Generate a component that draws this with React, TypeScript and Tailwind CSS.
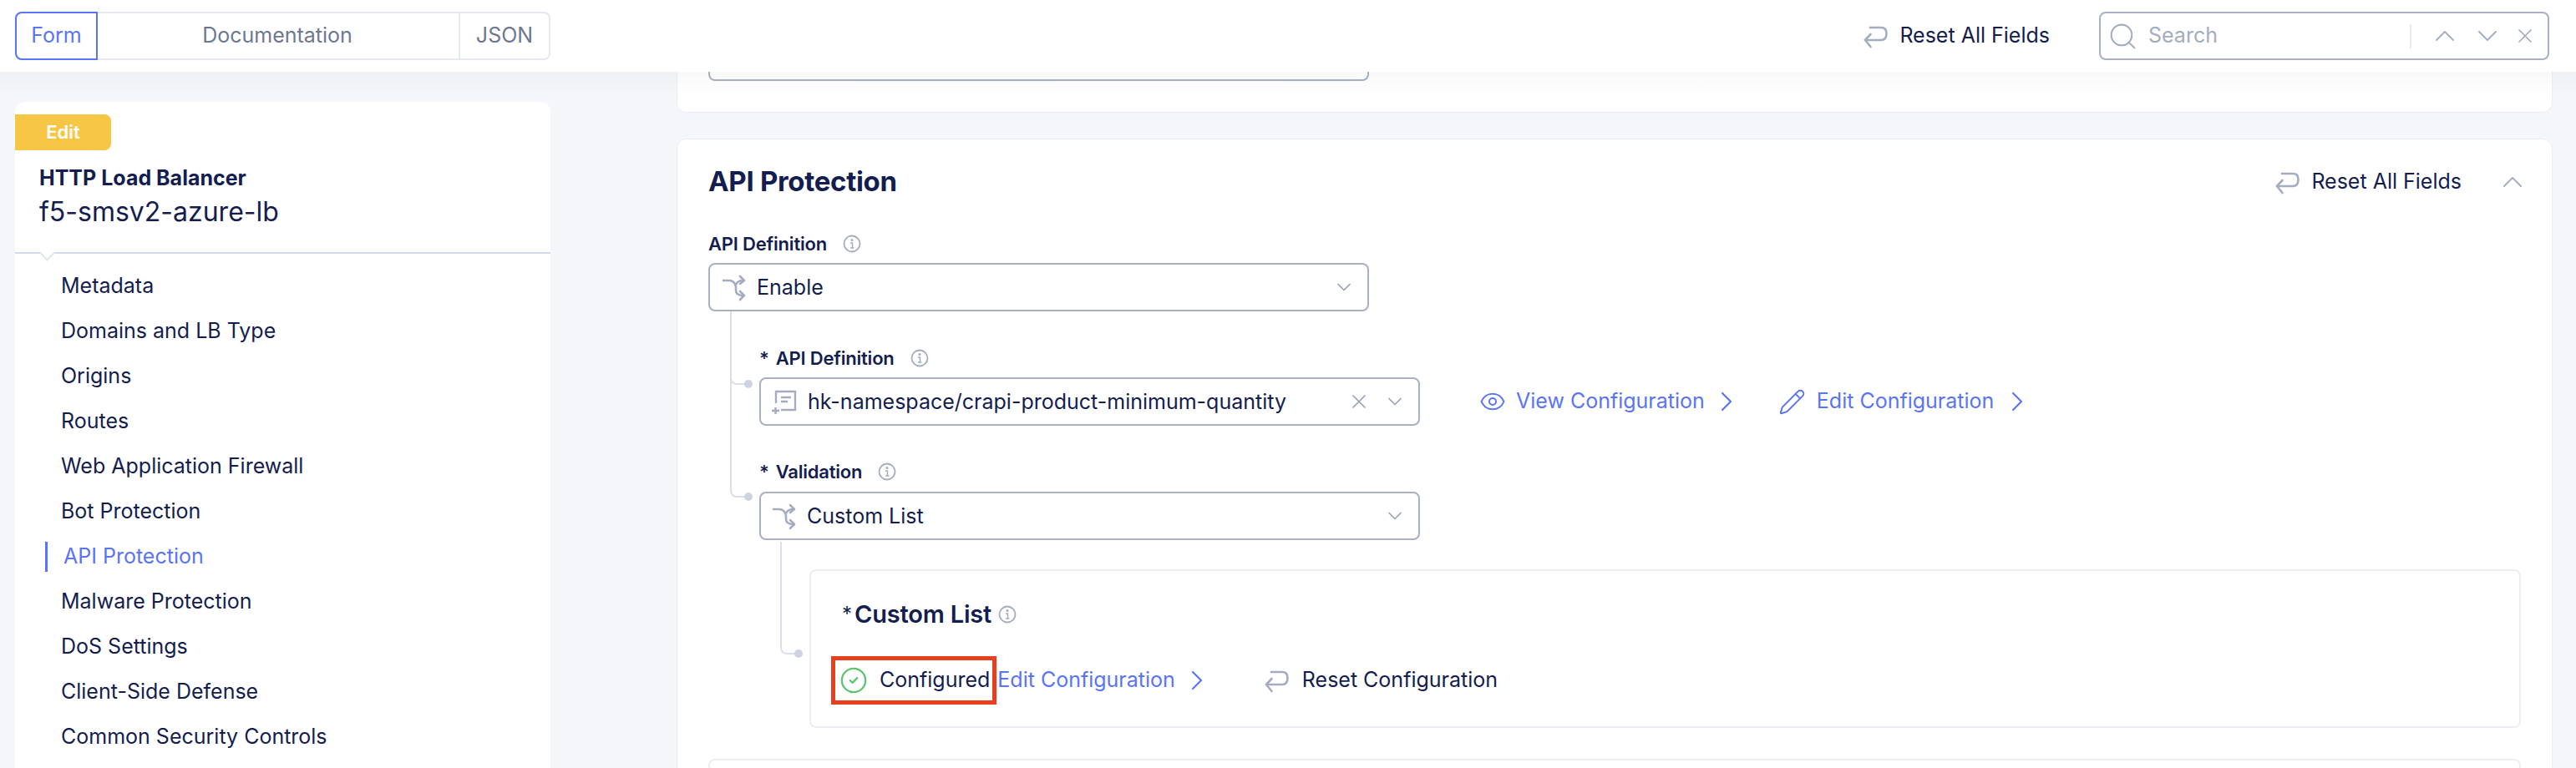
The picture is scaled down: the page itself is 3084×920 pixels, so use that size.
import { ChevronDown, ChevronRight, ChevronUp, CircleCheck, Eye, Pencil, Search, X } from "lucide-react";

const navItems = [
  "Metadata",
  "Domains and LB Type",
  "Origins",
  "Routes",
  "Web Application Firewall",
  "Bot Protection",
  "API Protection",
  "Malware Protection",
  "DoS Settings",
  "Client-Side Defense",
  "Common Security Controls",
];

function ResetIcon() {
  return (
    <svg width="30" height="30" viewBox="0 0 30 30" fill="none" stroke="#a5acc0" strokeWidth="2.6" strokeLinecap="round" strokeLinejoin="round" className="shrink-0">
      <path d="M9 5 H22 Q28.500 5 28.500 12 Q28.500 20 22 20 H3" />
      <path d="M9.500 13 L3 20 L9.500 28" />
    </svg>
  );
}

function SwitchIcon() {
  return (
    <svg width="34" height="38" viewBox="0 0 34 38" fill="none" stroke="#a5acc0" strokeWidth="2.6" strokeLinecap="round" strokeLinejoin="round" className="shrink-0">
      <path d="M5 11 H12 Q18 11 20 18 V23 Q20 29 29 29" />
      <path d="M25 24 L30 29 L25 34" />
      <path d="M20 16 Q22 11 29 11" />
      <path d="M25 6 L30 11 L25 15" />
    </svg>
  );
}

function DocIcon() {
  return (
    <svg width="36" height="36" viewBox="0 0 36 36" fill="none" stroke="#a5acc0" strokeWidth="2.4" className="shrink-0">
      <path d="M9 20 V6 H32 V28 H15" />
      <path d="M15 13 H27 M15 18 H23" />
      <path d="M4 29 H13 M8.500 25 V33" />
    </svg>
  );
}

function InfoIcon() {
  return (
    <svg width="22" height="22" viewBox="0 0 22 22" fill="none" stroke="#a5acc0" strokeWidth="1.800" className="shrink-0">
      <circle cx="11" cy="11" r="9.500" />
      <circle cx="11" cy="6.500" r="0.700" fill="#a5acc0" />
      <path d="M9 10 H11.500 V16 M9 16 H13.500" strokeWidth="1.500" />
    </svg>
  );
}

function Branch({ className }: { className: string }) {
  return (
    <div className={`absolute border-l-2 border-b-2 border-[#dcdfe9] rounded-bl-lg ${className}`}>
      <span className="absolute -right-[7px] -bottom-[6px] w-[10px] h-[10px] rounded-full bg-[#cfd3e1]" />
    </div>
  );
}

function Field({ label, required }: { label: string; required?: boolean }) {
  return (
    <div className="h-6 flex items-center text-[22px] font-semibold text-[#141d4f] tracking-[-0.2px]">
      {required && <span className="mr-2">*</span>}
      {label}
      <span className="ml-[19px]">
        <InfoIcon />
      </span>
    </div>
  );
}

function Select({ text, icon, clearable, pad }: { text: string; icon: React.ReactNode; clearable?: boolean; pad: string }) {
  return (
    <div className={`w-[791px] h-[58px] shrink-0 border-2 border-[#a9afc4] rounded-lg flex items-center bg-white ${pad}`}>
      {icon}
      <span className="ml-[11px] pt-[2px] text-[25px] text-[#141d4f]">{text}</span>
      <div className="ml-auto flex items-center gap-[15px] pr-[14px] text-[#9ba2b8]">
        {clearable && <X size={28} strokeWidth={1.5} />}
        <ChevronDown size={28} strokeWidth={1.5} />
      </div>
    </div>
  );
}

function Sidebar() {
  return (
    <aside className="w-[641px] ml-[18px] mt-[36px] shrink-0 bg-white rounded-t-xl">
      <div className="pt-[15px] h-[182px] border-b-2 border-[#d5d9e8] relative">
        <div className="w-[115px] h-[43px] bg-[#f8c645] rounded-r-lg flex items-center justify-center text-white text-[22px] font-semibold">Edit</div>
        <div className="pl-[29px] mt-[19px] text-[25px] leading-[28px] font-bold text-[#141d4f]">HTTP Load Balancer</div>
        <div className="pl-[29px] mt-[8px] text-[32px] leading-[38px] text-[#141d4f]">f5-smsv2-azure-lb</div>
        <span className="absolute left-[32px] -bottom-[8px] w-[13px] h-[13px] rotate-45 bg-white border-r-2 border-b-2 border-[#e2e5ee]" />
      </div>
      <nav className="pl-[55px] pt-[12px] flex flex-col">
        {navItems.map((item) =>
          item === "API Protection" ? (
            <div key={item} className="h-[54px] flex items-center -ml-[19px]">
              <span className="w-[3px] h-9 bg-[#5a74f8]" />
              <span className="ml-[19px] text-[25px] text-[#5a74f8]">{item}</span>
            </div>
          ) : (
            <div key={item} className="h-[54px] flex items-center text-[25px] text-[#141d4f]">
              {item}
            </div>
          )
        )}
      </nav>
    </aside>
  );
}

function ApiCard() {
  return (
    <section className="mt-[31px] bg-white border border-[#eceef4] rounded-xl pl-[37px] pr-[37px] pt-[31px] relative">
      <div className="h-10 flex items-center">
        <h2 className="text-[33px] font-bold text-[#141d4f] tracking-[-0.3px]">API Protection</h2>
        <div className="ml-auto flex items-center">
          <ResetIcon />
          <span className="ml-[14px] text-[25px] text-[#141d4f]">Reset All Fields</span>
          <ChevronUp size={40} strokeWidth={1.1} className="ml-[41px] -mr-[10px] text-[#a5acc0]" />
        </div>
      </div>

      <div className="mt-[42px]">
        <Field label="API Definition" />
      </div>
      <div className="mt-[11px]">
        <Select text="Enable" icon={<SwitchIcon />} pad="pl-[11px]" />
      </div>

      <div className="pl-[61px] relative">
        <Branch className="left-[26px] top-0 w-[20px] h-[88px]" />
        <Branch className="left-[26px] top-[80px] w-[20px] h-[143px]" />
        <div className="pt-[44px]">
          <Field label="API Definition" required />
        </div>
        <div className="mt-[11px] flex items-center">
          <Select text="hk-namespace/crapi-product-minimum-quantity" icon={<DocIcon />} clearable pad="pl-[9px]" />
          <div className="ml-[71px] flex items-center text-[25px] text-[#5a74f8]">
            <Eye size={32} strokeWidth={1.5} />
            <span className="ml-[12px]">View Configuration</span>
            <ChevronRight size={40} strokeWidth={1.3} className="ml-[6px]" />
            <Pencil size={33} strokeWidth={1.4} className="ml-[42px]" />
            <span className="ml-[13px]">Edit Configuration</span>
            <ChevronRight size={40} strokeWidth={1.3} className="ml-[8px]" />
          </div>
        </div>
        <div className="mt-[43px]">
          <Field label="Validation" required />
        </div>
        <div className="mt-[12px]">
          <Select text="Custom List" icon={<SwitchIcon />} pad="pl-[10px]" />
        </div>

        <div className="ml-[60px] mt-[35px] h-[190px] border-2 border-[#eceef4] rounded-lg pl-[37px] pt-[34px] relative">
          <Branch className="-left-[37px] -top-[35px] w-[20px] h-[135px]" />
          <div className="h-9 flex items-center text-[#141d4f]">
            <span className="text-[24px] mr-[3px]">*</span>
            <span className="text-[29px] font-semibold tracking-[-0.2px]">Custom List</span>
            <span className="ml-[8px]">
              <InfoIcon />
            </span>
          </div>
          <div className="mt-[40px] h-[42px] flex items-center text-[25px] relative">
            <span className="absolute -left-[13px] -top-[8px] w-[198px] h-[58px] border-[5px] border-[#e8401f] pointer-events-none" />
            <CircleCheck size={34} strokeWidth={1.6} className="-ml-[3px] text-[#5cc46e]" />
            <span className="ml-[14px] text-[#141d4f]">Configured</span>
            <span className="ml-[9px] text-[#5a74f8]">Edit Configuration</span>
            <ChevronRight size={40} strokeWidth={1.3} className="ml-[6px] text-[#5a74f8]" />
            <span className="ml-[60px]">
              <ResetIcon />
            </span>
            <span className="ml-[16px] text-[#141d4f]">Reset Configuration</span>
          </div>
        </div>
      </div>

      <div className="mt-[37px] h-[60px] border-2 border-b-0 border-[#eceef4] rounded-t-lg" />
    </section>
  );
}

export default function App() {
  return (
    <div className="h-[920px] w-[3084px] overflow-hidden bg-[#f5f6f9] flex flex-col font-['Inter',sans-serif]">
      <header className="h-[86px] shrink-0 bg-white flex items-center pl-[18px] pr-[32px] relative z-10">
        <div className="w-[641px] h-[58px] flex border-2 border-[#e6e8f0] rounded-lg text-[25px] text-[#6f7790]">
          <div className="w-[99px] -m-[2px] flex items-center justify-center border-2 border-[#5a74f8] rounded-l-lg text-[#5a74f8]">Form</div>
          <div className="flex-1 flex items-center justify-center border-r-2 border-[#e6e8f0]">Documentation</div>
          <div className="w-[106px] flex items-center justify-center">JSON</div>
        </div>
        <div className="ml-auto flex items-center">
          <ResetIcon />
          <span className="ml-[14px] text-[25px] text-[#141d4f]">Reset All Fields</span>
        </div>
        <div className="ml-[59px] w-[539px] h-[58px] border-2 border-[#a9afc4] rounded-lg flex items-center pl-[8px] text-[#a5acc0]">
          <Search size={37} strokeWidth={1.3} />
          <span className="ml-[12px] text-[25px]">Search</span>
          <span className="ml-auto h-[29px] w-[2px] bg-[#e6e8f0]" />
          <ChevronUp size={40} strokeWidth={1.1} className="ml-[20px]" />
          <ChevronDown size={40} strokeWidth={1.1} className="ml-[11px]" />
          <X size={28} strokeWidth={1.5} className="ml-[11px] mr-[13px]" />
        </div>
      </header>

      <div className="flex flex-1 min-h-0 relative">
        <div className="absolute inset-x-0 top-0 h-[30px] bg-gradient-to-b from-black/[0.025] to-transparent z-10 pointer-events-none" />
        <Sidebar />
        <main className="ml-[151px] w-[2246px] shrink-0">
          <section className="h-[49px] bg-white border border-t-0 border-[#eceef4] rounded-b-xl px-[37px] pb-[37px]">
            <div className="w-[791px] h-full border-2 border-t-0 border-[#a9afc4] rounded-b-lg" />
          </section>
          <ApiCard />
        </main>
      </div>
    </div>
  );
}
